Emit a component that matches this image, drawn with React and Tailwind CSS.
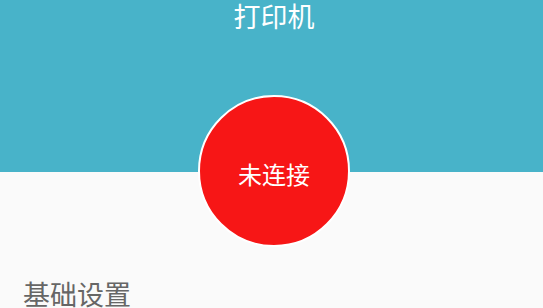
import React from "react";

export default function App() {
  return (
    <div
      className="w-[543px] h-[308px] overflow-hidden bg-[#fafafa]"
      style={{ fontFamily: '"Noto Sans CJK SC", "Noto Sans", sans-serif' }}
    >
      <header className="h-[172px] bg-[#48b3c9] flex justify-center pl-[5px]">
        <h1 className="text-white text-[27px] leading-none font-normal mt-[2px]">打印机</h1>
      </header>

      <div className="flex justify-center pl-[5px] -mt-[77px]">
        <div className="w-[152px] h-[152px] rounded-full border-2 border-white bg-[#f71616] flex items-center justify-center">
          <span className="text-white text-[24px] leading-none mt-[5px]">未连接</span>
        </div>
      </div>

      <div className="px-[23px] mt-[33px]">
        <h2 className="text-[#666666] text-[27px] leading-none font-normal">基础设置</h2>
      </div>
    </div>
  );
}
